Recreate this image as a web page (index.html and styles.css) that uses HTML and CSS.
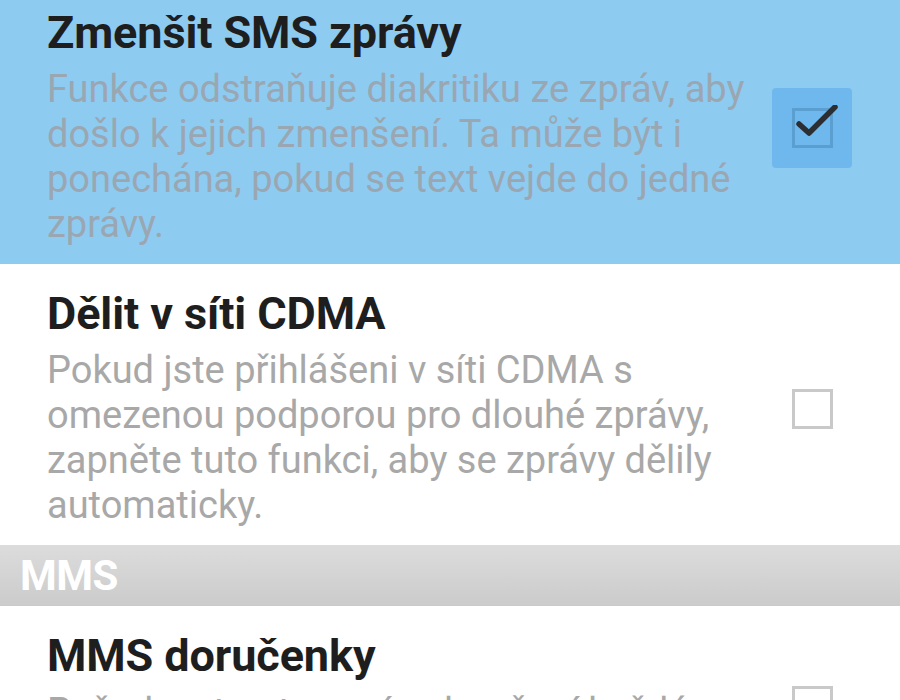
FILE: index.html
```html
<!DOCTYPE html>
<html lang="cs">
<head>
<meta charset="utf-8">
<title>Nastavení SMS</title>
<link rel="stylesheet" href="styles.css">
</head>
<body>
<div class="list">
  <div class="pref selected">
    <div class="text">
      <div class="title">Zmenšit SMS zprávy</div>
      <div class="summary">Funkce odstraňuje diakritiku ze zpráv, aby došlo k jejich zmenšení. Ta může být i ponechána, pokud se text vejde do jedné zprávy.</div>
    </div>
    <div class="widget">
      <div class="check-hl">
        <div class="box">
          <svg class="tick" viewBox="0 0 46 46" width="46" height="46"><path d="M7 19 L17 28 L43 2" fill="none" stroke="#2b2f33" stroke-width="5.5" stroke-linecap="round" stroke-linejoin="round"/></svg>
        </div>
      </div>
    </div>
  </div>
  <div class="pref">
    <div class="text">
      <div class="title">Dělit v síti CDMA</div>
      <div class="summary">Pokud jste přihlášeni v síti CDMA s omezenou podporou pro dlouhé zprávy, zapněte tuto funkci, aby se zprávy dělily automaticky.</div>
    </div>
    <div class="widget">
      <div class="check-hl plain"><div class="box"></div></div>
    </div>
  </div>
  <div class="category">MMS</div>
  <div class="pref">
    <div class="text">
      <div class="title">MMS doručenky</div>
      <div class="summary">Požadovat potvrzení o doručení každé odeslané zprávy</div>
    </div>
    <div class="widget">
      <div class="check-hl plain"><div class="box"></div></div>
    </div>
  </div>
</div>
</body>
</html>
```
FILE: styles.css
```css
html, body {
  margin: 0;
  padding: 0;
  background: #ffffff;
  overflow: hidden;
}
body {
  width: 900px;
  height: 700px;
  font-family: Roboto, "Liberation Sans", Arial, sans-serif;
}
.list {
  margin-top: -17px;
}
.pref {
  display: flex;
  align-items: center;
  padding: 25px 48px 17px 47px;
  background: #ffffff;
}
.pref.selected {
  background: #8ecbf1;
}
.text {
  flex: 1;
  min-width: 0;
}
.title {
  font-size: 45px;
  line-height: 50px;
  font-weight: 700;
  color: #1e1e1e;
  letter-spacing: -0.1px;
}
.summary {
  margin-top: 9px;
  font-size: 38px;
  line-height: 45px;
  color: #a8a8a8;
}
.selected .summary {
  color: #9aa7b2;
}
.widget {
  width: 80px;
  margin-left: 24px;
  display: flex;
  justify-content: center;
}
.check-hl {
  width: 80px;
  height: 80px;
  border-radius: 4px;
  background: #6fb8ed;
  display: flex;
  align-items: center;
  justify-content: center;
}
.check-hl.plain {
  background: transparent;
}
.box {
  position: relative;
  width: 35px;
  height: 34px;
  border: 3px solid #c9c9c9;
}
.selected .box {
  border-color: #5a9fd0;
}
.tick {
  position: absolute;
  left: -3px;
  top: -6px;
}
.category {
  height: 61px;
  background: linear-gradient(#dcdcdc, #cbcbcb);
  color: #ffffff;
  font-size: 42px;
  font-weight: 700;
  line-height: 61px;
  padding-left: 20px;
  letter-spacing: -0.5px;
}
```
